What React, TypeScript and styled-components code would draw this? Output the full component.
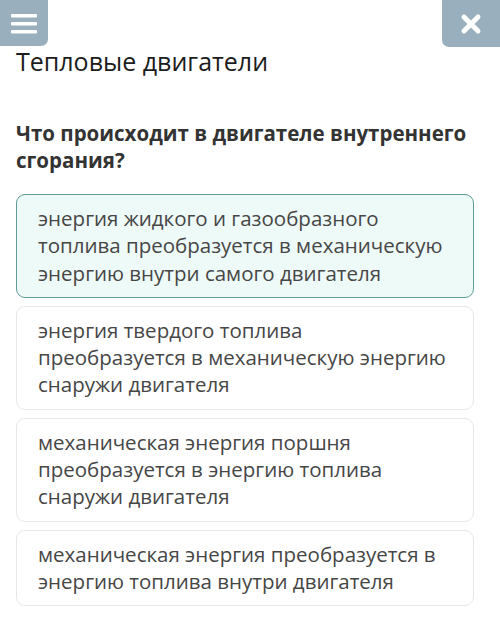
import React from "react";
import styled, { createGlobalStyle } from "styled-components";

const GlobalStyle = createGlobalStyle`
  html, body {
    margin: 0;
    padding: 0;
    background: #ffffff;
    font-family: "Open Sans", "Noto Sans", sans-serif;
  }
`;

const Page = styled.div`
  width: 500px;
  height: 625px;
  overflow: hidden;
  background: #ffffff;
`;

const TopBar = styled.div`
  display: flex;
  justify-content: space-between;
  height: 46px;
`;

const CornerButton = styled.button<{ $side: "left" | "right" }>`
  width: ${(p) => (p.$side === "left" ? "48px" : "58px")};
  height: ${(p) => (p.$side === "left" ? "46px" : "47px")};
  border: none;
  padding: 0;
  background: #9aafbd;
  border-radius: ${(p) => (p.$side === "left" ? "0 0 7px 0" : "0 0 0 7px")};
  display: flex;
  align-items: center;
  justify-content: center;
`;

const Content = styled.div`
  padding: 0 26px 0 16px;
`;

const Title = styled.h1`
  margin: 0;
  font-size: 25px;
  font-weight: 400;
  line-height: 30px;
  color: #1c1c1c;
`;

const Question = styled.h2`
  margin: 44px 0 0;
  font-size: 20.5px;
  font-weight: 700;
  line-height: 27px;
  color: #333333;
`;

const Options = styled.div`
  display: flex;
  flex-direction: column;
  gap: 8px;
  margin-top: 20px;
`;

const Option = styled.div<{ $selected?: boolean }>`
  border: ${(p) => (p.$selected ? "1.5px solid #5f9c96" : "1.5px solid #e6e8e8")};
  background: ${(p) => (p.$selected ? "#eefaf8" : "#ffffff")};
  border-radius: 9px;
  padding: 10px 24px 10px 21px;
  font-size: 20.5px;
  line-height: 27.3px;
  color: #464646;
`;

const options = [
  "энергия жидкого и газообразного топлива преобразуется в механическую энергию внутри самого двигателя",
  "энергия твердого топлива преобразуется в механическую энергию снаружи двигателя",
  "механическая энергия поршня преобразуется в энергию топлива снаружи двигателя",
  "механическая энергия преобразуется в энергию топлива внутри двигателя",
];

export default function App() {
  return (
    <Page>
      <GlobalStyle />
      <TopBar>
        <CornerButton $side="left">
          <svg width="28" height="24" viewBox="0 0 28 24">
            <rect x="1" y="3" width="26" height="3.5" rx="1" fill="#ffffff" />
            <rect x="1" y="11" width="26" height="3.5" rx="1" fill="#ffffff" />
            <rect x="1" y="19" width="26" height="3.5" rx="1" fill="#ffffff" />
          </svg>
        </CornerButton>
        <CornerButton $side="right">
          <svg width="22" height="22" viewBox="0 0 22 22">
            <path d="M4 4 L18 18 M18 4 L4 18" stroke="#ffffff" strokeWidth="5" strokeLinecap="round" />
          </svg>
        </CornerButton>
      </TopBar>
      <Content>
        <Title>Тепловые двигатели</Title>
        <Question>Что происходит в двигателе внутреннего сгорания?</Question>
        <Options>
          {options.map((text, i) => (
            <Option key={i} $selected={i === 0}>
              {text}
            </Option>
          ))}
        </Options>
      </Content>
    </Page>
  );
}
